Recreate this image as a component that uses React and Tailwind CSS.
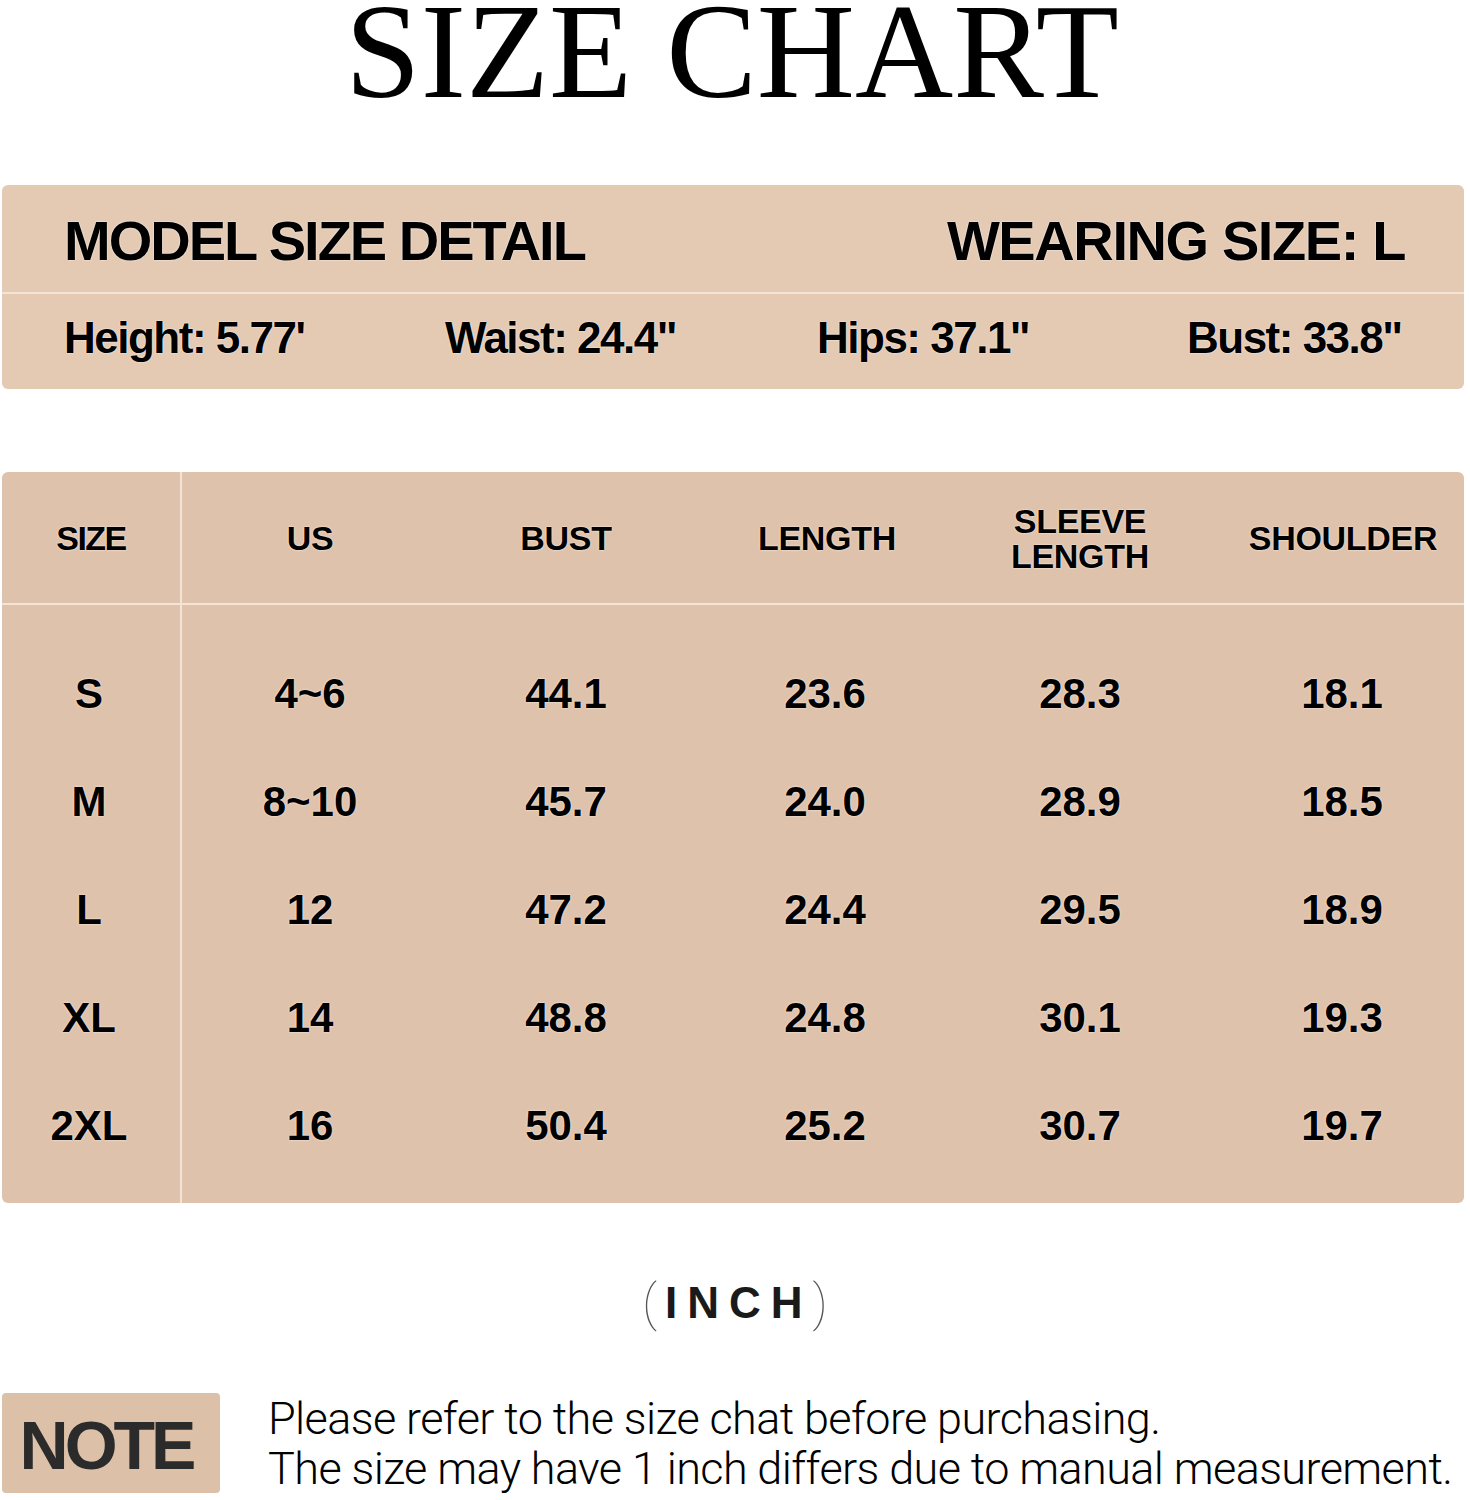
import React from "react";

const sans = { fontFamily: '"Liberation Sans", Arial, sans-serif' };

const headers = ["US", "BUST", "LENGTH", "SLEEVE\nLENGTH", "SHOULDER"];
const rows = [
  ["S", "4~6", "44.1", "23.6", "28.3", "18.1"],
  ["M", "8~10", "45.7", "24.0", "28.9", "18.5"],
  ["L", "12", "47.2", "24.4", "29.5", "18.9"],
  ["XL", "14", "48.8", "24.8", "30.1", "19.3"],
  ["2XL", "16", "50.4", "25.2", "30.7", "19.7"],
];

const cols = "grid grid-cols-[256px_256px_266px_240px_1fr]";

export default function App() {
  return (
    <div className="w-[1470px] h-[1500px] bg-white overflow-hidden text-black" style={sans}>
      {/* Title */}
      <div className="h-[185px] flex justify-center">
        <div
          className="text-[136px] leading-[0.75] font-normal pr-[6px]"
          style={{ fontFamily: '"Liberation Serif", "Times New Roman", serif' }}
        >
          SIZE CHART
        </div>
      </div>

      {/* Model size detail */}
      <div className="ml-[2px] w-[1462px] h-[204px] bg-[#e4c9b3] rounded-[6px] flex flex-col font-bold [text-shadow:0_0_2px_#fff]">
        <div className="h-[107px] flex items-center justify-between pl-[62px] pr-[59px] pt-[4px] text-[56px] tracking-[-2px]">
          <span>MODEL SIZE DETAIL</span>
          <span className="tracking-[-1.4px]">WEARING SIZE: L</span>
        </div>
        <div className="h-[2px] bg-[#f3e4d6]" />
        <div className="flex-1 grid grid-cols-[381px_372px_370px_1fr] items-center pl-[62px] pb-[8px] text-[44px] tracking-[-1.5px]">
          <span>Height: 5.77'</span>
          <span>Waist: 24.4"</span>
          <span>Hips: 37.1"</span>
          <span>Bust: 33.8"</span>
        </div>
      </div>

      <div className="h-[83px]" />

      {/* Table */}
      <div className="ml-[2px] w-[1462px] h-[731px] bg-[#dfc2ab] rounded-[6px] flex font-bold [text-shadow:0_0_2px_#fff]">
        <div className="w-[178px] flex flex-col">
          <div className="h-[131px] flex items-center justify-center text-[34px] tracking-[-1.5px] pt-[2px]">SIZE</div>
          <div className="h-[2px] bg-[#f3e4d6]" />
          <div className="flex-1 flex flex-col pt-[34px]">
            {rows.map((r) => (
              <div key={r[0]} className="h-[108px] flex items-center justify-center text-[42px] pr-[4px]">
                {r[0]}
              </div>
            ))}
          </div>
        </div>
        <div className="w-[2px] bg-[#f3e4d6]" />
        <div className="flex-1 flex flex-col">
          <div className={`h-[131px] ${cols} items-center text-[34px] leading-[35px] tracking-[-0.3px] pt-[2px]`}>
            {headers.map((h, i) => (
              <div key={h} className={`text-center whitespace-pre-line ${i === 4 ? "pl-[22px]" : ""}`}>
                {h}
              </div>
            ))}
          </div>
          <div className="h-[2px] bg-[#f3e4d6]" />
          <div className="flex-1 flex flex-col pt-[34px]">
            {rows.map((r) => (
              <div key={r[0]} className={`h-[108px] ${cols} items-center text-[42px]`}>
                {r.slice(1).map((v, i) => (
                  <div key={i} className={`text-center ${i === 4 ? "pl-[20px]" : ""} ${i === 2 ? "pr-[4px]" : ""}`}>
                    {v}
                  </div>
                ))}
              </div>
            ))}
          </div>
        </div>
      </div>

      {/* INCH */}
      <div className="h-[190px] flex justify-center pt-[72px]">
        <div className="flex items-center h-[56px] text-[#1a1a1a]">
          <span className="text-[50px] text-[#555] leading-none" style={{ fontFamily: "Roboto, sans-serif", fontWeight: 100 }}>(</span>
          <span className="text-[44px] font-bold tracking-[10px] pl-[8px] leading-none">INCH</span>
          <span className="text-[50px] text-[#555] leading-none" style={{ fontFamily: "Roboto, sans-serif", fontWeight: 100 }}>)</span>
        </div>
      </div>

      {/* Note */}
      <div className="flex items-start">
        <div className="ml-[2px] w-[218px] h-[100px] bg-[#dcc0a8] rounded-[4px] flex items-center justify-center">
          <span className="text-[68px] font-bold text-[#2b2b2b] tracking-[-4px] leading-none pr-[10px] pt-[4px]">NOTE</span>
        </div>
        <div
          className="ml-[48px] text-[45px] leading-[50px] tracking-[-0.6px] pt-[1px]"
          style={{ fontFamily: "Roboto, sans-serif", fontWeight: 300 }}
        >
          <div className="whitespace-nowrap">Please refer to the size chat before purchasing.</div>
          <div className="whitespace-nowrap">The size may have 1 inch differs due to manual measurement.</div>
        </div>
      </div>
    </div>
  );
}
